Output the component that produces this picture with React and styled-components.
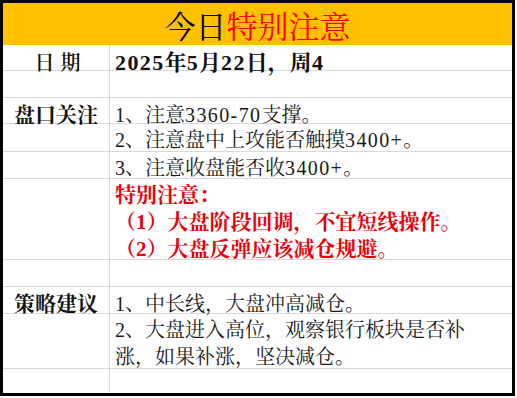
import React from "react";
import styled, { createGlobalStyle } from "styled-components";

const Global = createGlobalStyle`
  html, body { margin: 0; padding: 0; background: #fff; }
  body { font-family: "Liberation Serif", "Noto Serif CJK SC", "Noto Sans CJK SC", serif; }
`;

const LINE = "#d9d9d9";

const Sheet = styled.div`
  box-sizing: border-box;
  width: 515px;
  height: 396px;
  border: 3px solid #000;
  display: flex;
  flex-direction: column;
  overflow: hidden;
  color: #1a1a1a;
`;

const Header = styled.div`
  height: 42px;
  flex: none;
  background: #ffc000;
  display: flex;
  align-items: center;
  justify-content: center;
  font-size: 31px;
  line-height: 1;
  color: #000;
  padding-top: 6px;
  box-sizing: border-box;
`;

const Red = styled.span`
  color: ${(p) => p.$color || "#ff0000"};
`;

const Num = styled.span`
  letter-spacing: 1.4px;
`;

const Row = styled.div`
  display: grid;
  grid-template-columns: 107px 1fr;
  height: ${(p) => (p.$h ? `${p.$h}px` : "auto")};
  flex: ${(p) => (p.$h ? "none" : "1")};
  box-sizing: border-box;
  border-bottom: ${(p) => (p.$last ? "none" : `1px solid ${LINE}`)};
`;

const Label = styled.div`
  border-right: 1px solid ${LINE};
  display: flex;
  align-items: center;
  justify-content: center;
  font-size: ${(p) => p.$size || 21}px;
  font-weight: ${(p) => p.$weight || 700};
  letter-spacing: ${(p) => p.$spacing || 0}px;
  padding-left: ${(p) => p.$indent || 0}px;
  color: #111;
  padding-bottom: ${(p) => p.$pb ?? 3}px;
  box-sizing: border-box;
`;

const Cell = styled.div`
  display: flex;
  flex-direction: column;
  justify-content: center;
  padding-left: 5px;
  padding-top: ${(p) => p.$pt ?? 0}px;
  padding-bottom: ${(p) => p.$pb ?? 3}px;
  box-sizing: border-box;
  font-size: ${(p) => p.$size || 20}px;
  font-weight: ${(p) => p.$weight || 400};
  color: ${(p) => p.$color || "#1a1a1a"};
  white-space: nowrap;
`;

const Line = styled.div`
  height: 27px;
  line-height: 27px;
`;

export default function App() {
  return (
    <>
      <Global />
      <Sheet>
        <Header>
          今日<Red>特别注意</Red>
        </Header>

        <Row $h={26}>
          <Label $size={20} $weight={600} $spacing={6} $indent={9} $pb={6}>日期</Label>
          <Cell $size={22} $weight={700} $color="#111" $pb={7}>
            <span>
              <Num>2025</Num>年<Num>5</Num>月<Num>22</Num>日，周<Num>4</Num>
            </span>
          </Cell>
        </Row>

        <Row $h={27}>
          <Label />
          <Cell />
        </Row>

        <Row $h={26}>
          <Label>盘口关注</Label>
          <Cell>
            <span>1、注意<Num>3360-70</Num>支撑。</span>
          </Cell>
        </Row>
        <Row $h={28}>
          <Label />
          <Cell>
            <span>2、注意盘中上攻能否触摸<Num>3400+</Num>。</span>
          </Cell>
        </Row>
        <Row $h={27}>
          <Label />
          <Cell>
            <span>3、注意收盘能否收<Num>3400+</Num>。</span>
          </Cell>
        </Row>

        <Row $h={81}>
          <Label />
          <Cell $size={21} $weight={700} $color="#e8000b" $pt={3} $pb={0}>
            <Line>特别注意：</Line>
            <Line>（1）大盘阶段回调，不宜短线操作。</Line>
            <Line>（2）大盘反弹应该减仓规避。</Line>
          </Cell>
        </Row>

        <Row $h={27}>
          <Label />
          <Cell />
        </Row>

        <Row $h={27}>
          <Label $pb={1}>策略建议</Label>
          <Cell $pb={1}>1、中长线，大盘冲高减仓。</Cell>
        </Row>
        <Row $h={55}>
          <Label />
          <Cell $pt={3} $pb={0}>
            <Line>2、大盘进入高位，观察银行板块是否补</Line>
            <Line>涨，如果补涨，坚决减仓。</Line>
          </Cell>
        </Row>

        <Row $last>
          <Label />
          <Cell />
        </Row>
      </Sheet>
    </>
  );
}
